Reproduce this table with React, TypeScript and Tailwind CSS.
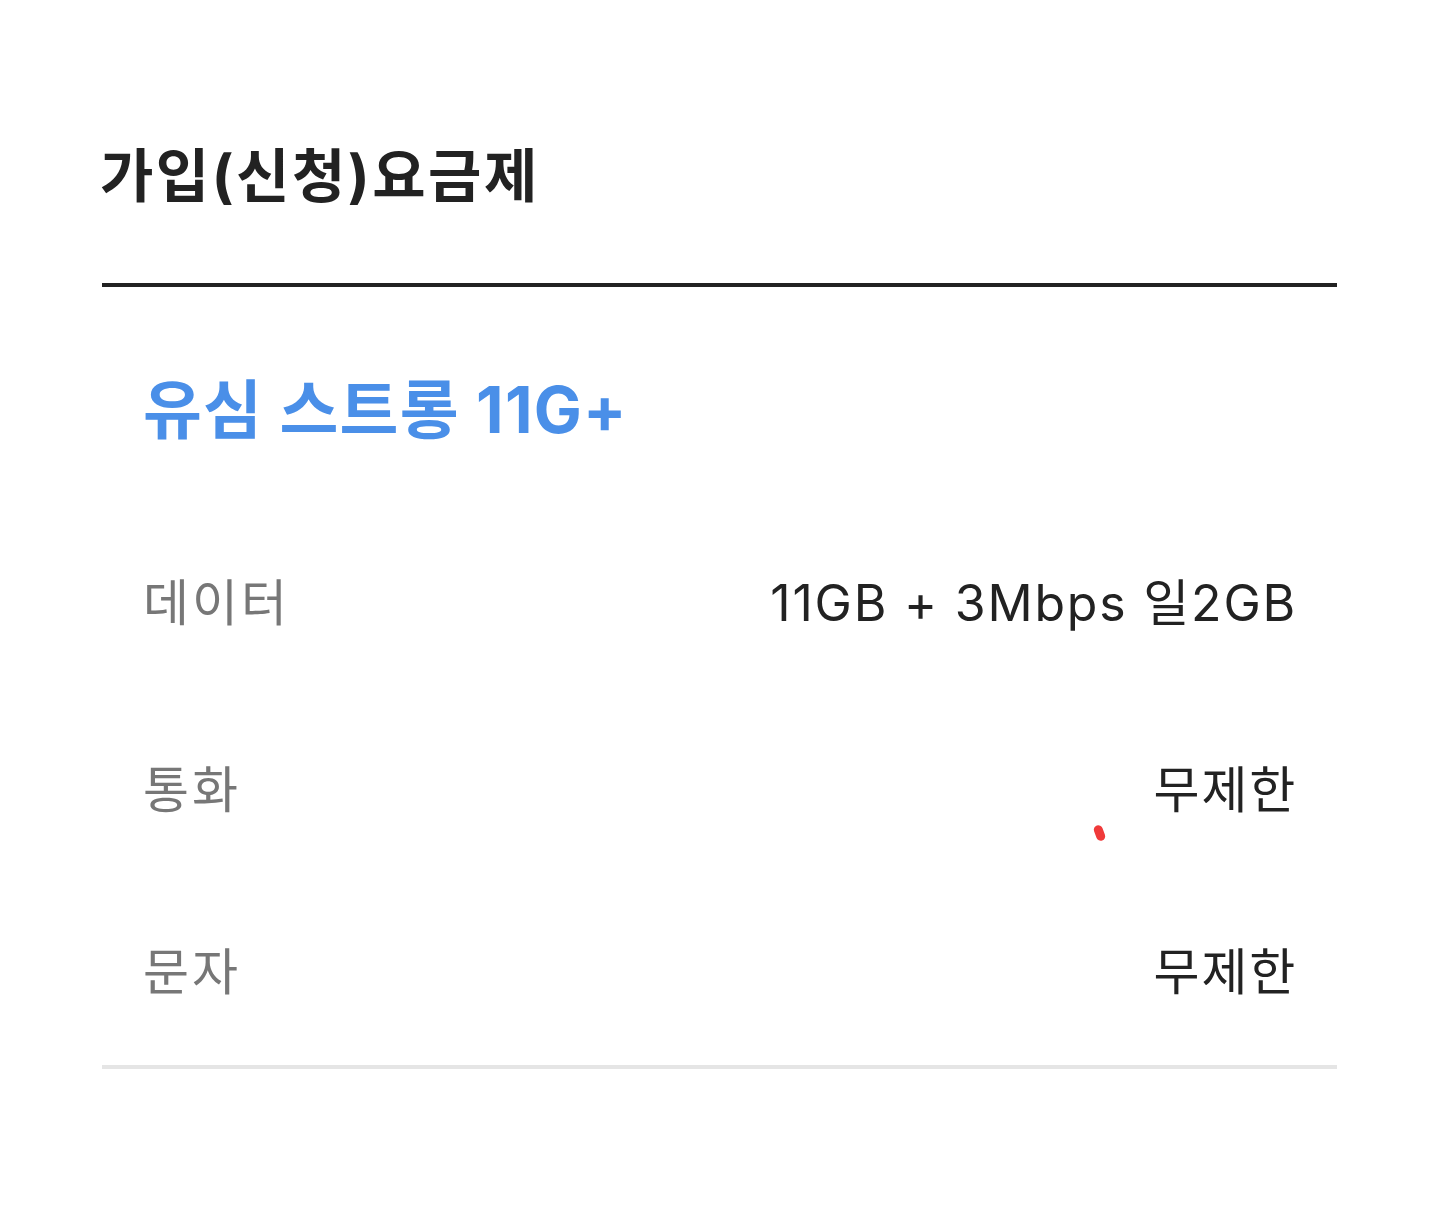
import React from "react";

const rows = [
  { label: "데이터", value: "11GB + 3Mbps 일2GB", gap: "mt-[123px]" },
  { label: "통화", value: "무제한", gap: "mt-[127px]" },
  { label: "문자", value: "무제한", gap: "mt-[122px]" },
];

export default function App() {
  return (
    <div
      className="relative min-h-[1215px] w-full bg-white px-[102px] pt-[136px]"
      style={{ fontFamily: '"Inter", "Noto Sans CJK KR", sans-serif' }}
    >
      <div className="border-b-4 border-[#222222] pb-[67px]">
        <h1 className="-ml-[2px] text-[58px] font-bold leading-[80px] tracking-[2.5px] text-[#222222]">
          가입(신청)요금제
        </h1>
      </div>

      <div className="border-b-4 border-[#e5e5e5] pb-[63px] pl-[41px] pr-[40px] pt-[83px]">
        <h2 className="text-[64px] font-bold leading-[80px] tracking-[1.2px] text-[#4a8fe8]">
          유심 스트롱 11G+
        </h2>

        {rows.map((row) => (
          <div
            key={row.label}
            className={`${row.gap} flex items-center justify-between text-[50px] leading-[60px]`}
          >
            <span className="tracking-[3px] text-[#777777]">{row.label}</span>
            <span className="tracking-[1.8px] text-[#222222]">{row.value}</span>
          </div>
        ))}
      </div>

      {/* touch marker left on the capture */}
      <span className="absolute left-[1095px] top-[825px] h-[16px] w-[9px] -rotate-[20deg] rounded-full bg-[#f03a3a]" />
    </div>
  );
}
